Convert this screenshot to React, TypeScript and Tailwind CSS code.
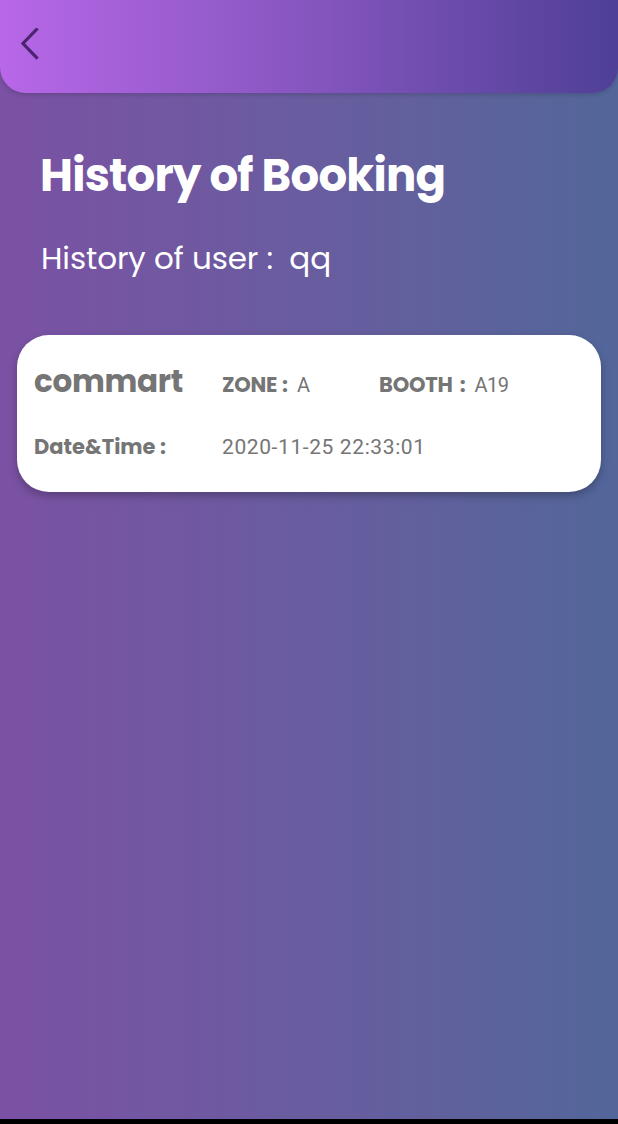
import React from "react";

export default function App() {
  return (
    <div className="w-[618px] h-[1124px] flex flex-col bg-black overflow-hidden">
      <div className="h-[1119px] flex flex-col bg-gradient-to-r from-[#7b51a4] to-[#52669a]">
        <div className="h-[93px] shrink-0 rounded-b-[26px] bg-gradient-to-r from-[#b867e8] via-[#8656bf] to-[#4f3f97] flex items-start pl-[21px] pt-[28px] shadow-[0_2px_4px_rgba(0,0,0,0.15)]">
          <svg width="18" height="32" viewBox="0 0 18 32" fill="none">
            <path d="M15.5 1.5 L2 15.5 L15.5 29.5" stroke="#4a246f" strokeWidth="3.2" strokeLinecap="square" />
          </svg>
        </div>
        <div className="pl-[40px] pt-[56px] text-white">
          <h1 className="font-['Poppins','Inter',sans-serif] font-bold text-[45px] leading-[54px] tracking-[-0.75px]">
            History of Booking
          </h1>
          <p className="pl-[1px] mt-[36px] font-['Poppins','Inter',sans-serif] text-[31px] leading-[38px] tracking-[-0.1px]">
            History of user :&nbsp; qq
          </p>
        </div>
        <div className="mx-[17px] mt-[58px] h-[157px] rounded-[32px] bg-white shadow-[0_4px_8px_rgba(0,0,0,0.25)] px-[17px] pt-[23px] text-[#757575]">
          <div className="flex items-baseline h-[42px]">
            <span className="w-[188px] font-['Poppins',sans-serif] font-bold text-[31px] tracking-[-0.3px]">commart</span>
            <span className="w-[157px] flex items-baseline">
              <span className="font-['Poppins',sans-serif] font-bold text-[21px] tracking-[-0.3px]">ZONE</span>
              <span className="ml-[5px] font-['Poppins',sans-serif] font-bold text-[21px]">:</span>
              <span className="ml-[9px] font-['Roboto',sans-serif] text-[20px]">A</span>
            </span>
            <span className="flex items-baseline">
              <span className="font-['Poppins',sans-serif] font-bold text-[21px] tracking-[-0.2px]">BOOTH</span>
              <span className="ml-[7px] font-['Poppins',sans-serif] font-bold text-[21px]">:</span>
              <span className="ml-[9px] font-['Roboto',sans-serif] text-[20px] tracking-[-0.6px]">A19</span>
            </span>
          </div>
          <div className="flex items-baseline mt-[31px]">
            <span className="w-[188px] font-['Poppins',sans-serif] font-bold text-[21px] tracking-[0px]">Date&amp;Time :</span>
            <span className="font-['Roboto',sans-serif] text-[21px] tracking-[0.6px]">2020-11-25 22:33:01</span>
          </div>
        </div>
      </div>
    </div>
  );
}
